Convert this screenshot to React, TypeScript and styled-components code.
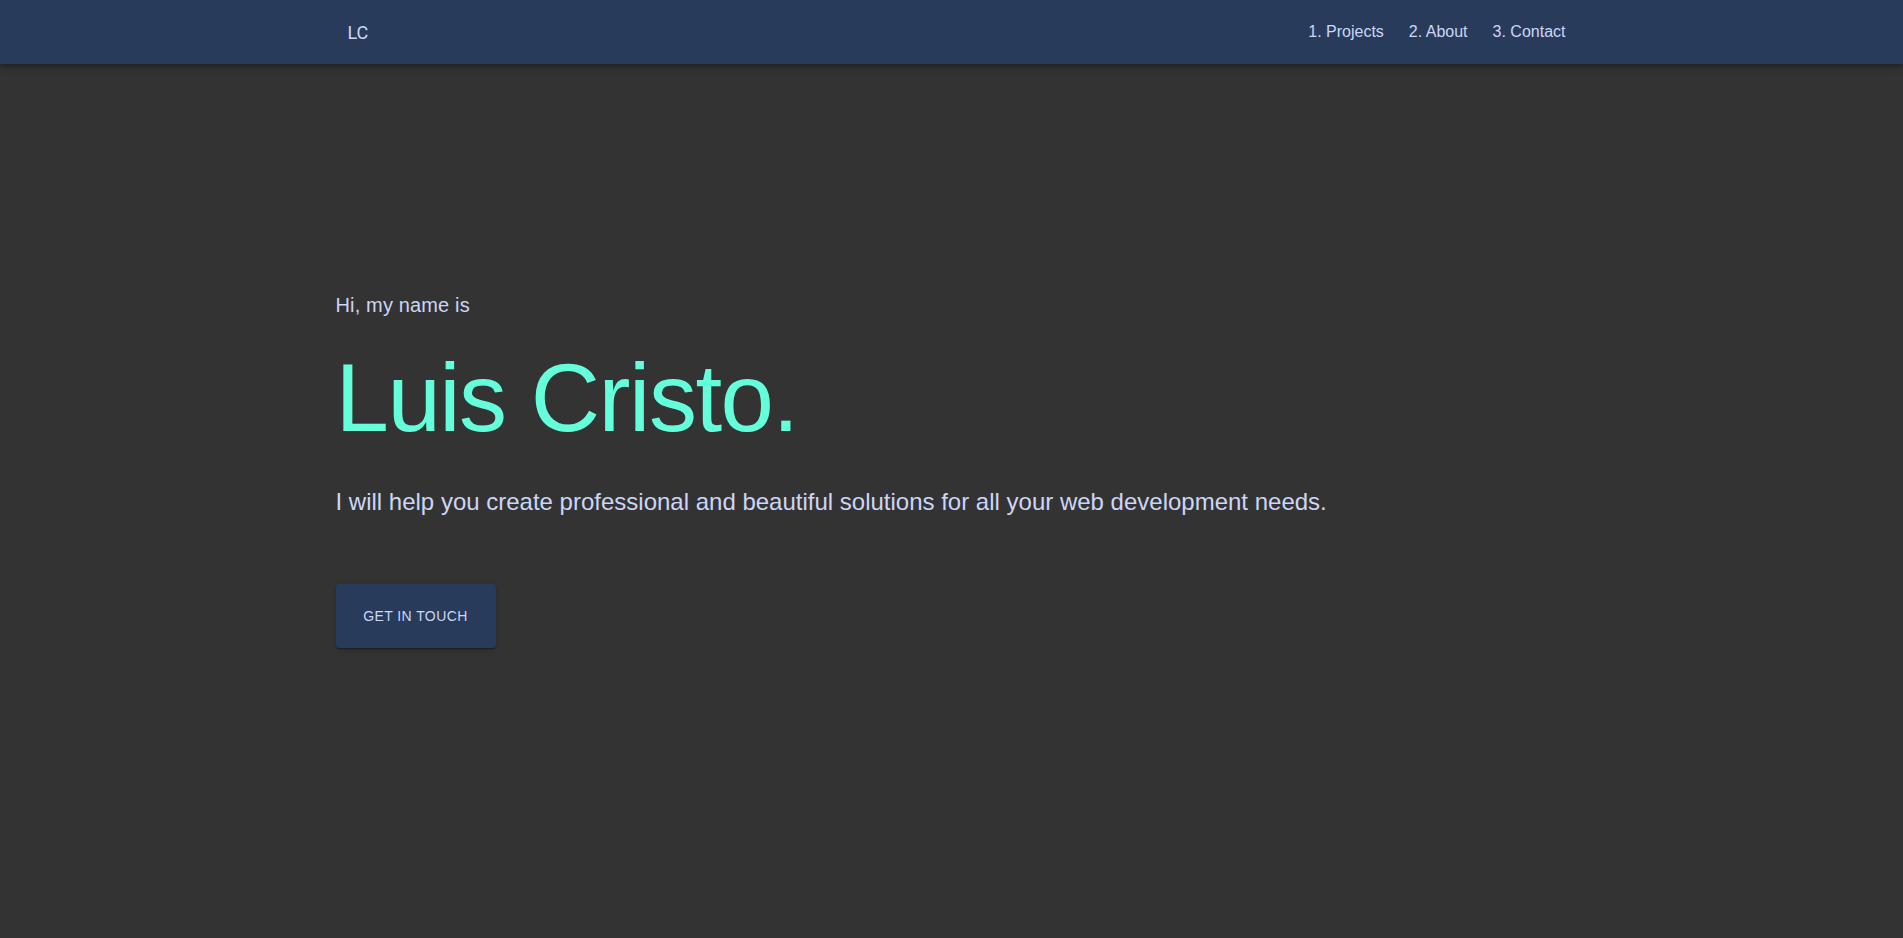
import React from "react";
import styled, { createGlobalStyle } from "styled-components";

const GlobalStyle = createGlobalStyle`
  html, body {
    margin: 0;
    padding: 0;
    background: #333333;
    font-family: "Liberation Sans", Arial, sans-serif;
    overflow: hidden;
  }
  * { box-sizing: border-box; }
`;

const Page = styled.div`
  min-height: 100vh;
  background: #333333;
  color: #ccd6f6;
`;

const Header = styled.header`
  height: 64px;
  background: #283b5a;
  box-shadow: 0px 2px 4px -1px rgba(0, 0, 0, 0.2), 0px 4px 5px 0px rgba(0, 0, 0, 0.14),
    0px 1px 10px 0px rgba(0, 0, 0, 0.12);
  position: relative;
  z-index: 2;
`;

const Container = styled.div`
  max-width: 1280px;
  margin: 0 auto;
  padding: 0 24px;
  height: 100%;
`;

const Toolbar = styled(Container)`
  display: flex;
  align-items: center;
  justify-content: space-between;
`;

const Logo = styled.a`
  font-family: Roboto, "Liberation Sans", sans-serif;
  font-size: 18px;
  color: #ccd6f6;
  padding-left: 12px;
  text-decoration: none;
  cursor: pointer;
`;

const Nav = styled.nav`
  display: flex;
  gap: 25px;
  padding-right: 2px;
`;

const NavLink = styled.a`
  font-family: "Liberation Sans", Arial, sans-serif;
  font-size: 16px;
  color: #ccd6f6;
  text-decoration: none;
  cursor: pointer;
`;

const Hero = styled.section`
  padding-top: 226px;
`;

const Greeting = styled.p`
  margin: 0 0 22px;
  font-size: 20px;
  line-height: 30px;
  letter-spacing: 0.0075em;
  color: #ccd6f6;
`;

const Name = styled.h1`
  margin: 0 0 32px;
  font-size: 96px;
  line-height: 112px;
  font-weight: 400;
  letter-spacing: -0.01562em;
  color: #64ffda;
`;

const Tagline = styled.p`
  margin: 0 0 66px;
  font-size: 24px;
  line-height: 32px;
  color: #ccd6f6;
`;

const CTA = styled.button`
  width: 160px;
  height: 64px;
  border: none;
  border-radius: 4px;
  background: #283b5a;
  color: #ccd6f6;
  font-family: "Liberation Sans", Arial, sans-serif;
  font-size: 14px;
  letter-spacing: 0.02857em;
  text-transform: uppercase;
  box-shadow: 0px 3px 1px -2px rgba(0, 0, 0, 0.2), 0px 2px 2px 0px rgba(0, 0, 0, 0.14),
    0px 1px 5px 0px rgba(0, 0, 0, 0.12);
  cursor: pointer;
`;

export default function App() {
  return (
    <Page>
      <GlobalStyle />
      <Header>
        <Toolbar>
          <Logo>LC</Logo>
          <Nav>
            <NavLink>1. Projects</NavLink>
            <NavLink>2. About</NavLink>
            <NavLink>3. Contact</NavLink>
          </Nav>
        </Toolbar>
      </Header>
      <Hero>
        <Container>
          <Greeting>Hi, my name is</Greeting>
          <Name>Luis Cristo.</Name>
          <Tagline>
            I will help you create professional and beautiful solutions for all your web
            development needs.
          </Tagline>
          <CTA>Get in touch</CTA>
        </Container>
      </Hero>
    </Page>
  );
}
